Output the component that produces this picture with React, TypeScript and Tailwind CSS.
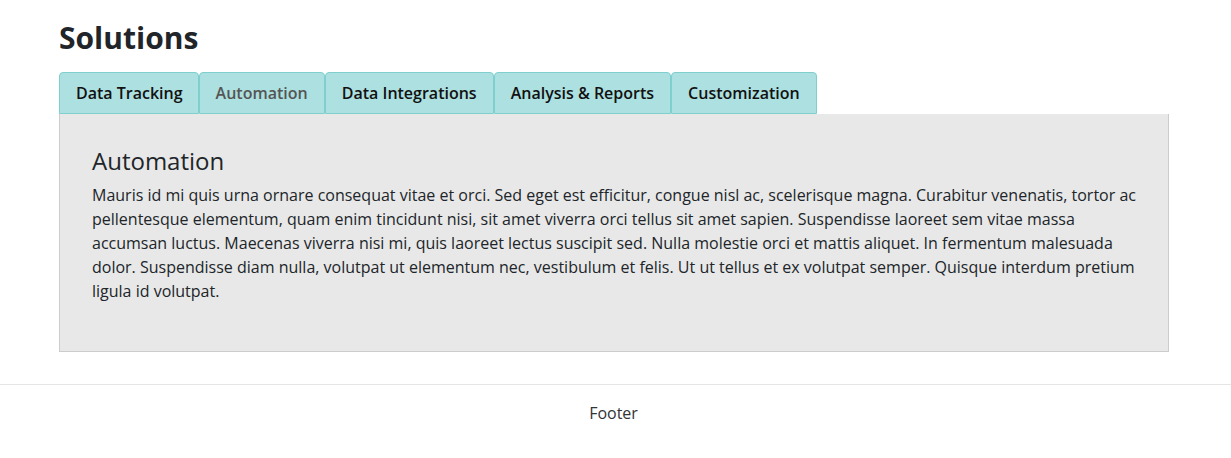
import React from "react";

const tabs = [
  "Data Tracking",
  "Automation",
  "Data Integrations",
  "Analysis & Reports",
  "Customization",
];

export default function App() {
  const active = "Automation";

  return (
    <div className="min-h-[458px] bg-white text-[#212529] font-['Open_Sans',sans-serif]">
      <main className="ml-[59px] w-[1110px] pt-[18px] pb-[32px]">
        <h1 className="text-[30px] leading-[40px] font-bold mb-[14px]">Solutions</h1>

        {/* Tab row */}
        <div className="flex">
          {tabs.map((t, i) => (
            <div
              key={t}
              className={`h-[42px] pl-[16px] flex items-center text-[16px] font-semibold rounded-t-[4px] border border-[#7fcfcf] bg-[#ade0e0] ${
                i === 0 ? "pr-[15px]" : "pr-[16px]"
              } ${t === active ? "text-[#555555]" : "text-[#111111]"}`}
            >
              {t}
            </div>
          ))}
        </div>

        {/* Panel */}
        <div className="bg-[#e8e8e8] border border-[#cccccc] border-t-0 px-[32px] pt-[32px] pb-[48px]">
          <h2 className="text-[24px] leading-[30px] font-normal mb-[7px]">Automation</h2>
          <p className="text-[16px] leading-[24px]">
            Mauris id mi quis urna ornare consequat vitae et orci. Sed eget est efficitur, congue nisl ac,
            scelerisque magna. Curabitur venenatis, tortor ac pellentesque elementum, quam enim tincidunt
            nisi, sit amet viverra orci tellus sit amet sapien. Suspendisse laoreet sem vitae massa accumsan
            luctus. Maecenas viverra nisi mi, quis laoreet lectus suscipit sed. Nulla molestie orci et mattis
            aliquet. In fermentum malesuada dolor. Suspendisse diam nulla, volutpat ut elementum nec,
            vestibulum et felis. Ut ut tellus et ex volutpat semper. Quisque interdum pretium ligula id
            volutpat.
          </p>
        </div>
      </main>

      <footer className="border-t border-[#e5e5e5] h-[56px] pr-[4px] flex items-center justify-center text-[16px] text-[#333333]">
        Footer
      </footer>
    </div>
  );
}
